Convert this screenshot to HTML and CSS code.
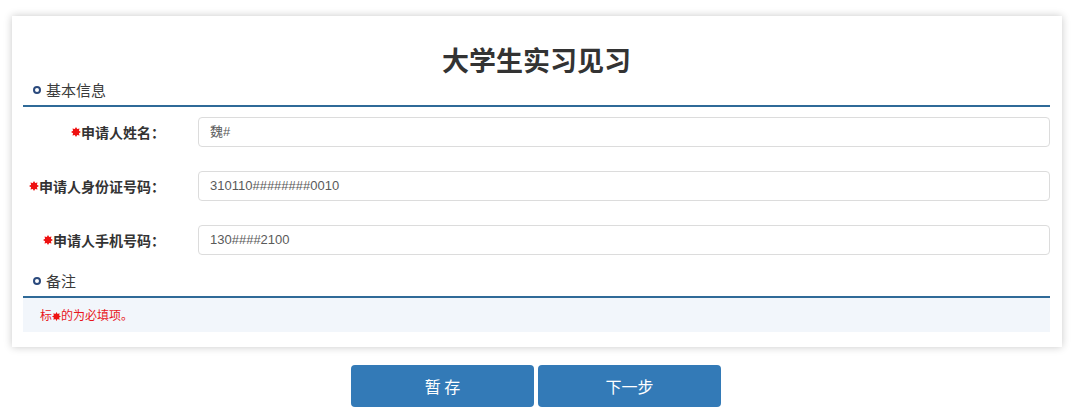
FILE: index.html
```html
<!DOCTYPE html>
<html lang="zh-CN">
<head>
<meta charset="utf-8">
<title>大学生实习见习</title>
<link rel="stylesheet" href="styles.css">
</head>
<body>
<div class="page">
  <div class="card">
    <h1 class="title">大学生实习见习</h1>
    <div class="section-head"><span class="ring"></span><span>基本信息</span></div>
    <div class="form">
      <div class="row">
        <label class="label"><svg class="star" viewBox="0 0 10 10"><polygon points="5,0 6.2,2.1 8.5,1.5 7.9,3.8 10,5 7.9,6.2 8.5,8.5 6.2,7.9 5,10 3.8,7.9 1.5,8.5 2.1,6.2 0,5 2.1,3.8 1.5,1.5 3.8,2.1"/></svg>申请人姓名：</label>
        <div class="input">魏#</div>
      </div>
      <div class="row">
        <label class="label"><svg class="star" viewBox="0 0 10 10"><polygon points="5,0 6.2,2.1 8.5,1.5 7.9,3.8 10,5 7.9,6.2 8.5,8.5 6.2,7.9 5,10 3.8,7.9 1.5,8.5 2.1,6.2 0,5 2.1,3.8 1.5,1.5 3.8,2.1"/></svg>申请人身份证号码：</label>
        <div class="input">310110########0010</div>
      </div>
      <div class="row">
        <label class="label"><svg class="star" viewBox="0 0 10 10"><polygon points="5,0 6.2,2.1 8.5,1.5 7.9,3.8 10,5 7.9,6.2 8.5,8.5 6.2,7.9 5,10 3.8,7.9 1.5,8.5 2.1,6.2 0,5 2.1,3.8 1.5,1.5 3.8,2.1"/></svg>申请人手机号码：</label>
        <div class="input">130####2100</div>
      </div>
    </div>
    <div class="section-head section-head-2"><span class="ring"></span><span>备注</span></div>
    <div class="note">标<svg class="star star-sm" viewBox="0 0 10 10"><polygon points="5,0 6.2,2.1 8.5,1.5 7.9,3.8 10,5 7.9,6.2 8.5,8.5 6.2,7.9 5,10 3.8,7.9 1.5,8.5 2.1,6.2 0,5 2.1,3.8 1.5,1.5 3.8,2.1"/></svg>的为必填项。</div>
  </div>
  <div class="actions">
    <button class="btn">暂 存</button>
    <button class="btn">下一步</button>
  </div>
</div>
</body>
</html>
```
FILE: styles.css
```css
* { box-sizing: border-box; }
html, body { margin: 0; padding: 0; background: #fff; }
body {
  font-family: "Liberation Sans", "Noto Sans CJK SC", sans-serif;
  color: #333;
}
.page {
  width: 1050px;
  margin: 16px 0 0 12px;
}
.card {
  background: #fff;
  box-shadow: 0 0 8px rgba(0, 0, 0, 0.22);
  padding: 24px 12px 15px 11px;
}
.title {
  margin: 0;
  text-align: center;
  font-family: "Noto Sans CJK SC", sans-serif;
  font-size: 27px;
  font-weight: 700;
  line-height: 40px;
  height: 40px;
  color: #333;
}
.section-head {
  display: flex;
  align-items: center;
  height: 27px;
  padding: 0 0 5px 10px;
  border-bottom: 2px solid #2f6a98;
  font-family: "Noto Sans CJK SC", sans-serif;
  font-size: 15px;
  line-height: 20px;
  color: #3a3a3a;
}
.section-head-2 { margin-top: 16px; }
.ring {
  width: 8px;
  height: 8px;
  border: 2px solid #2b4a7d;
  border-radius: 50%;
  margin-right: 5px;
  flex: none;
}
.form {
  display: flex;
  flex-direction: column;
  gap: 24px;
  padding-top: 10px;
}
.row {
  display: flex;
  align-items: center;
}
.label {
  width: 142px;
  margin-right: 33px;
  display: flex;
  justify-content: flex-end;
  align-items: center;
  font-family: "Noto Sans CJK SC", sans-serif;
  font-size: 14px;
  font-weight: 700;
  color: #333;
  white-space: nowrap;
}
.star {
  width: 10px;
  height: 10px;
  fill: #ee1111;
  flex: none;
}
.star-sm {
  width: 9px;
  height: 9px;
  vertical-align: -1px;
  margin: 0;
}
.input {
  flex: 1;
  height: 30px;
  border: 1px solid #dcdcdc;
  border-radius: 4px;
  padding: 0 11px;
  font-size: 13px;
  line-height: 28px;
  color: #5a5a5a;
  background: #fff;
}
.note {
  height: 34px;
  line-height: 34px;
  padding-left: 17px;
  background: #f2f6fb;
  font-family: "Noto Sans CJK SC", sans-serif;
  font-size: 12px;
  color: #e8161b;
}
.actions {
  display: flex;
  justify-content: center;
  gap: 4px;
  margin-top: 18px;
  padding-right: 2px;
}
.btn {
  width: 183px;
  height: 42px;
  border: none;
  border-radius: 4px;
  background: #337ab7;
  color: #fff;
  font-family: "Noto Sans CJK SC", sans-serif;
  font-size: 16px;
  cursor: pointer;
}
```
